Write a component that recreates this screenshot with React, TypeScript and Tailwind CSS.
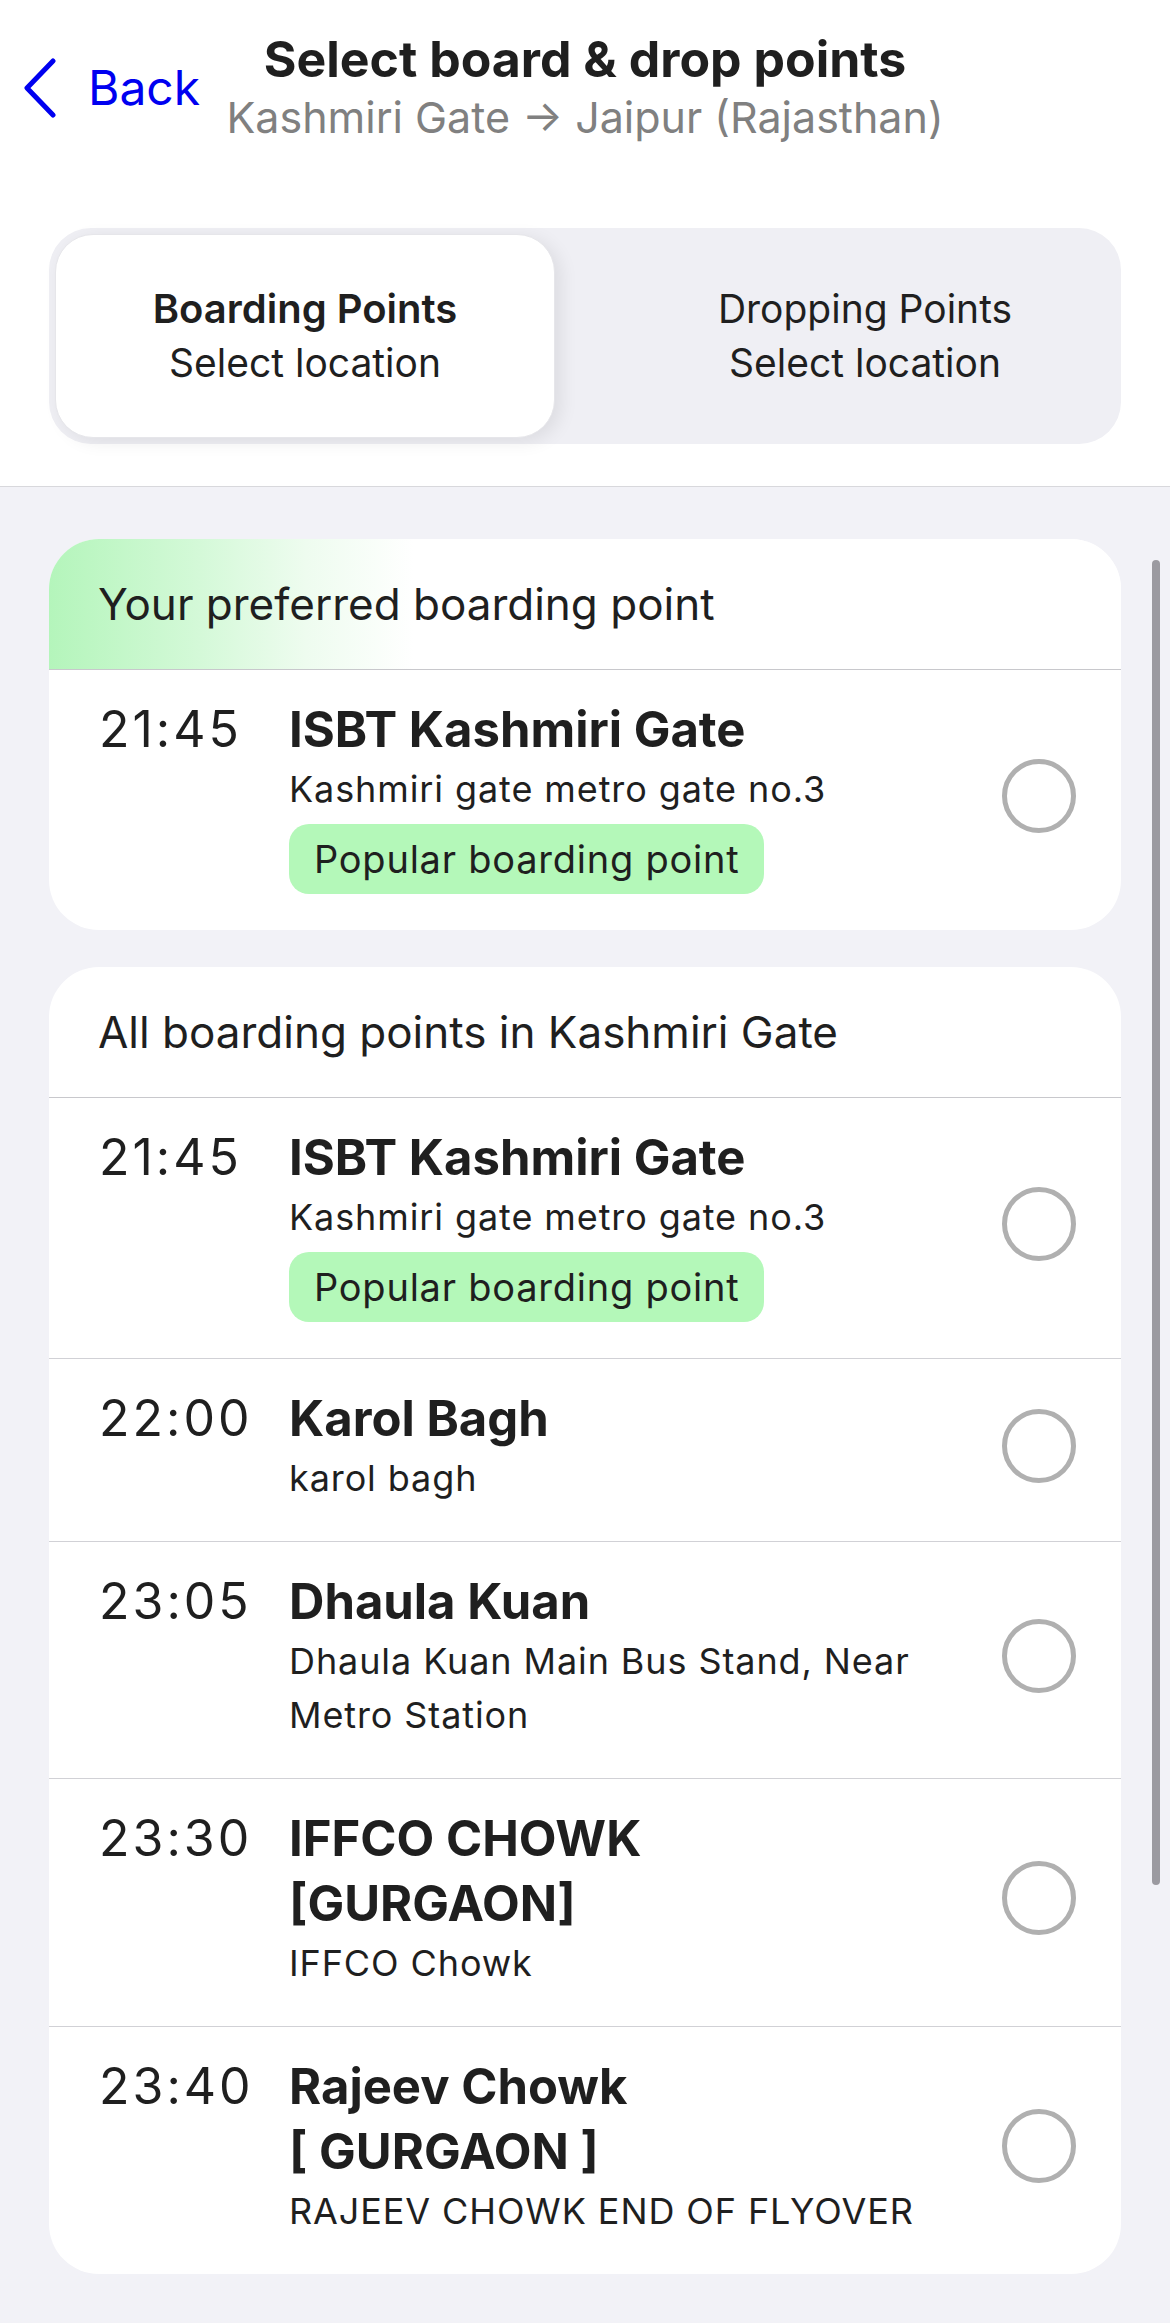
import type { ReactNode } from "react";

type Stop = {
  time: string;
  name: string;
  address: string;
  popular?: boolean;
};

const PREFERRED: Stop[] = [
  { time: "21:45", name: "ISBT Kashmiri Gate", address: "Kashmiri gate metro gate no.3", popular: true },
];

const ALL_STOPS: Stop[] = [
  { time: "21:45", name: "ISBT Kashmiri Gate", address: "Kashmiri gate metro gate no.3", popular: true },
  { time: "22:00", name: "Karol Bagh", address: "karol bagh" },
  { time: "23:05", name: "Dhaula Kuan", address: "Dhaula Kuan Main Bus Stand, Near Metro Station" },
  { time: "23:30", name: "IFFCO CHOWK\n[GURGAON]", address: "IFFCO Chowk" },
  { time: "23:40", name: "Rajeev Chowk\n[ GURGAON ]", address: "RAJEEV CHOWK END OF FLYOVER" },
];

function BackChevron() {
  return (
    <svg width="36" height="60" viewBox="0 0 36 60" fill="none" aria-hidden="true">
      <path d="M31 3 L5 30 L31 57" stroke="#0000f0" strokeWidth="5" strokeLinecap="round" strokeLinejoin="round" />
    </svg>
  );
}

function StopRow({ stop, first }: { stop: Stop; first?: boolean }) {
  return (
    <div className={`flex items-center pl-[50px] pr-[45px] pt-[27px] pb-[36px] ${first ? "" : "border-t border-[#d1d1d6]"}`}>
      <div className="flex flex-1 items-start">
        <span className="w-[190px] shrink-0 text-[50px] leading-[65px] tracking-[0.06em] text-[#1f1f1f]">{stop.time}</span>
        <div className="flex w-[660px] flex-col items-start">
          <span className="whitespace-pre-line text-[49px] font-bold leading-[65px] text-[#1f1f1f]">{stop.name}</span>
          <span className="text-[36px] leading-[54px] tracking-[0.025em] text-[#1f1f1f]">{stop.address}</span>
          {stop.popular && (
            <span className="mt-[8px] flex h-[70px] items-center rounded-[20px] bg-[#b4f8b9] px-[25px] text-[38px] tracking-[0.02em] text-[#1f1f1f]">
              Popular boarding point
            </span>
          )}
        </div>
      </div>
      <span className="h-[74px] w-[74px] shrink-0 rounded-full border-[5px] border-[#b0b0b0]" />
    </div>
  );
}

function Card({ header, green, children }: { header: string; green?: boolean; children: ReactNode }) {
  return (
    <section className="overflow-hidden rounded-[50px] bg-white">
      <div
        className={`flex h-[131px] items-center border-b border-[#c8c8cc] pl-[49px] text-[44px] text-[#1f1f1f] ${
          green ? "bg-[linear-gradient(90deg,#b4f5bb_0%,#d4f9d8_14%,#eefcef_24%,#ffffff_34%)]" : ""
        }`}
      >
        {header}
      </div>
      {children}
    </section>
  );
}

export default function App() {
  return (
    <div className="relative min-h-[2323px] w-full bg-[#f2f2f7] font-['Inter','Noto_Sans',sans-serif]">
      <header className="border-b border-[#d8d8dc] bg-white pb-[42px]">
        <div className="grid grid-cols-[1fr_auto_1fr] items-center pt-[30px]">
          <button className="flex items-center gap-[30px] justify-self-start pl-[22px] text-[48px] text-[#0000f0]">
            <BackChevron />
            <span className="leading-none">Back</span>
          </button>
          <div className="flex flex-col items-center">
            <h1 className="text-[50px] font-bold leading-[58px] text-[#1f1f1f]">Select board &amp; drop points</h1>
            <p className="text-[43px] leading-[58px] text-[#808080]">Kashmiri Gate → Jaipur (Rajasthan)</p>
          </div>
          <div />
        </div>

        <div className="mx-[49px] mt-[82px] grid h-[216px] grid-cols-2 gap-[60px] rounded-[42px] bg-[#efeff4] p-[6px]">
          <div className="flex flex-col items-center justify-center rounded-[38px] border border-[#e6e6ea] bg-white shadow-[6px_4px_18px_rgba(0,0,0,0.08)]">
            <span className="text-[40px] font-semibold leading-[54px] text-[#1f1f1f]">Boarding Points</span>
            <span className="text-[39px] leading-[54px] text-[#1f1f1f]">Select location</span>
          </div>
          <div className="flex flex-col items-center justify-center">
            <span className="text-[39px] leading-[54px] text-[#1f1f1f]">Dropping Points</span>
            <span className="text-[39px] leading-[54px] text-[#1f1f1f]">Select location</span>
          </div>
        </div>
      </header>

      <main className="flex flex-col gap-[37px] px-[49px] pt-[52px] pb-[55px]">
        <Card header="Your preferred boarding point" green>
          {PREFERRED.map((s, i) => (
            <StopRow key={s.name} stop={s} first={i === 0} />
          ))}
        </Card>
        <Card header="All boarding points in Kashmiri Gate">
          {ALL_STOPS.map((s, i) => (
            <StopRow key={s.name + i} stop={s} first={i === 0} />
          ))}
        </Card>
      </main>

      <div className="absolute left-[1152px] top-[560px] h-[1325px] w-[8px] rounded-full bg-[#9b9aa0]" />
    </div>
  );
}
